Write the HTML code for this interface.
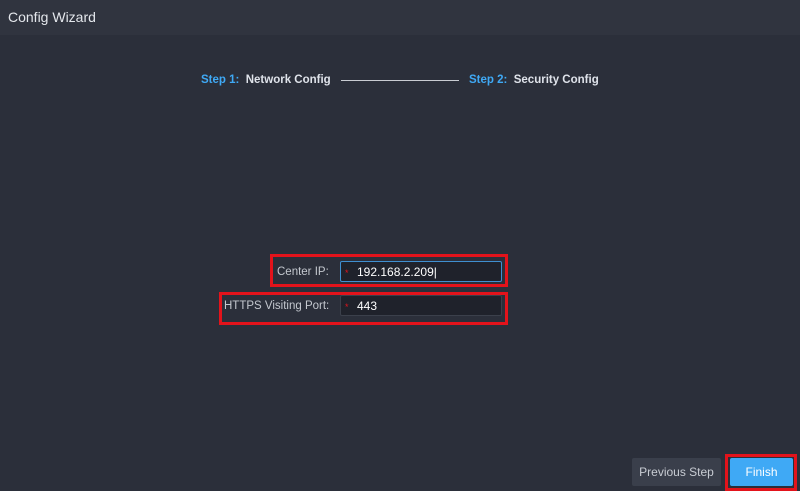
<!DOCTYPE html>
<html><head><style>
*{margin:0;padding:0;box-sizing:border-box}
body{width:800px;height:491px;background:#2b2f3a;font-family:"Liberation Sans",Arial,sans-serif;position:relative;overflow:hidden;color:#dfe3ea}
.hdr{position:absolute;left:0;top:0;width:800px;height:35px;background:#30343f;font-size:14px;line-height:35px;padding-left:8px;color:#e4e7ec}
.a{position:absolute;white-space:nowrap}
.step{font-size:11.5px;font-weight:bold;top:74px}
.blue{color:#3fa9f5}
.line{position:absolute;left:341px;top:80px;width:118px;height:1px;background:#c9ccd2}
.red{position:absolute;border:3px solid #e3131b}
.inp{position:absolute;background:#1f222b;border:1px solid #3b404b;border-radius:2px;font-size:12px;color:#fff;line-height:20px;padding-left:16px}
.inp:before{content:"*";color:#e3131b;position:absolute;left:4px;top:1px;font-size:9px}
.lbl{font-size:11.5px;color:#c4c8cf}
.btn{position:absolute;height:28px;line-height:28px;text-align:center;font-size:12px;border-radius:2px}
</style></head><body>
<div class="hdr">Config Wizard</div>
<div class="a step" style="left:201px"><span class="blue">Step 1:</span>&nbsp; Network Config</div>
<div class="line"></div>
<div class="a step" style="left:469px"><span class="blue">Step 2:</span>&nbsp; Security Config</div>
<div class="red" style="left:270px;top:254px;width:238px;height:33px"></div>
<div class="red" style="left:219px;top:292px;width:289px;height:33px"></div>
<div class="a lbl" style="left:277px;top:266px">Center IP:</div>
<div class="inp" style="left:340px;top:261px;width:162px;height:21px;border-color:#3f8fd0">192.168.2.209|</div>
<div class="a lbl" style="left:224px;top:300px">HTTPS Visiting Port:</div>
<div class="inp" style="left:340px;top:295px;width:162px;height:21px">443</div>
<div class="btn" style="left:632px;top:458px;width:89px;background:#3a3f4b;color:#c8ccd3">Previous Step</div>
<div class="red" style="left:725px;top:454px;width:72px;height:37px"></div>
<div class="btn" style="left:730px;top:458px;width:63px;background:#3fa9f5;color:#fff">Finish</div>
</body></html>
